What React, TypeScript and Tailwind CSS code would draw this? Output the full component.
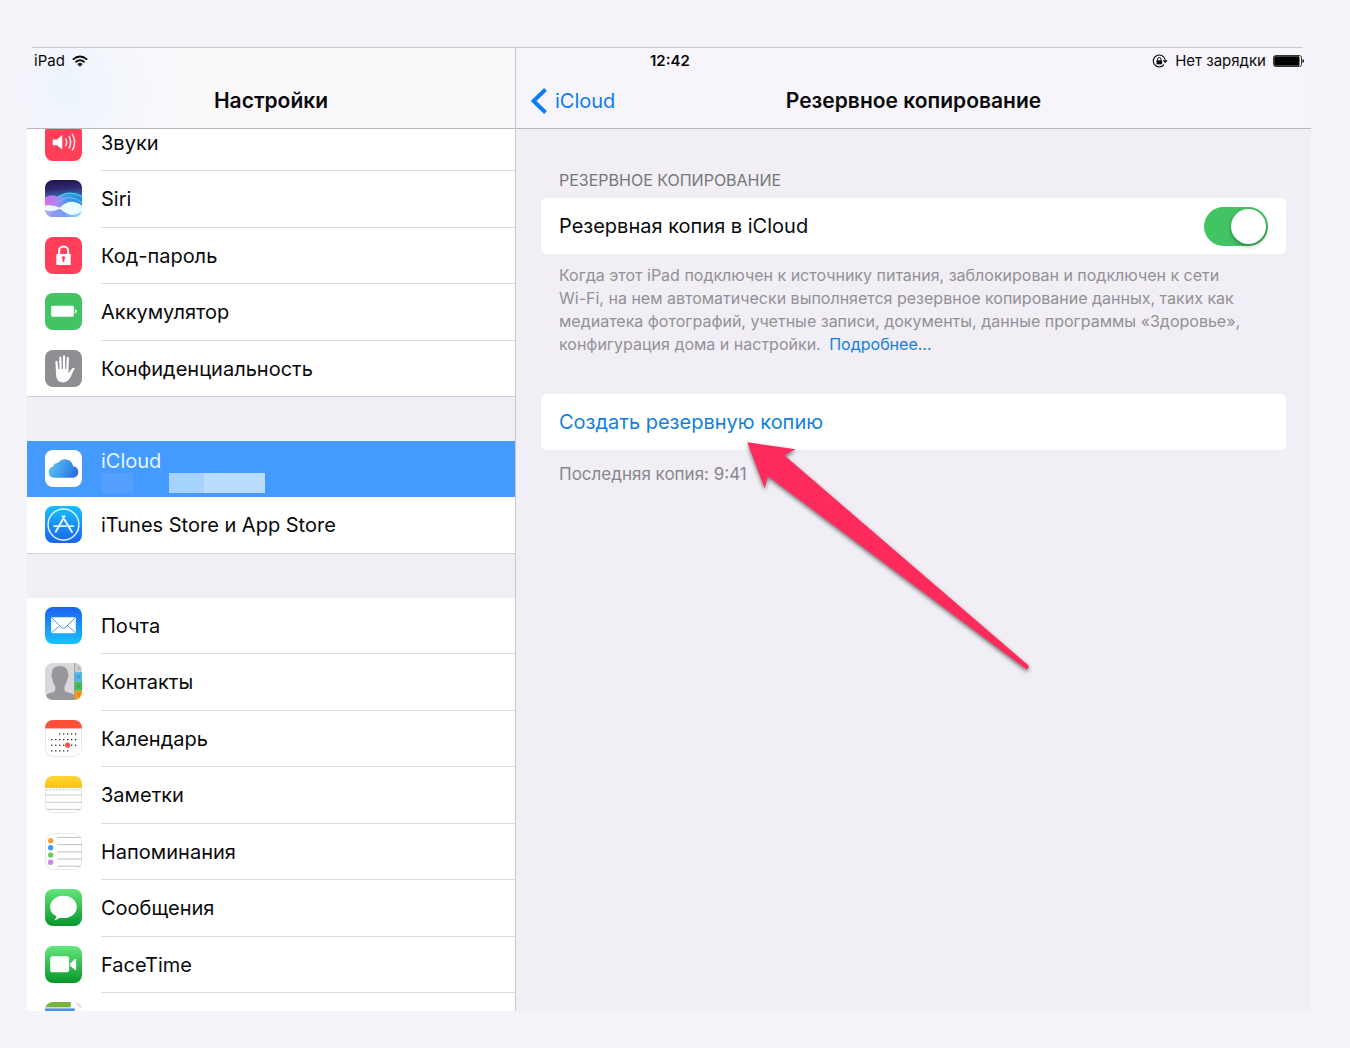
import React, { useState } from "react";

type IconProps = { children: React.ReactNode };

// All app icons share one rounded tile, drawn on a 36 unit canvas
const Tile: React.FC<IconProps> = ({ children }) => (
  <svg viewBox="0 0 36 36" aria-hidden="true" className="mt-[9px] size-[37px] shrink-0 overflow-hidden rounded-[8px]">
    {children}
  </svg>
);

const SoundsIcon = () => (
  <Tile>
    <rect width="36" height="36" fill="#ff3f57" />
    <path d="M7.5 15h4.3l5-4.3v14.2l-5-4.2H7.5z" fill="#fff" />
    <path d="M20 14q2.2 3.8 0 7.6M23.2 11.8q3.6 6 0 12M26.4 9.6q5 8.2 0 16.4" fill="none" stroke="#ffe3e7" strokeWidth="1.5" />
  </Tile>
);

const SiriIcon = () => (
  <Tile>
    <defs>
      <linearGradient id="siri-bg" x1="0.3" y1="0" x2="0.4" y2="1">
        <stop offset="0" stopColor="#22124a" />
        <stop offset="0.25" stopColor="#2f2a72" />
        <stop offset="0.45" stopColor="#3a62ae" />
        <stop offset="1" stopColor="#8fb4f4" />
      </linearGradient>
      <linearGradient id="siri-wave" x1="0" y1="0" x2="1" y2="0">
        <stop offset="0" stopColor="#ee6cec" />
        <stop offset="0.35" stopColor="#b08cf6" />
        <stop offset="0.6" stopColor="#3f9cf0" />
        <stop offset="1" stopColor="#1c8fe0" />
      </linearGradient>
      <linearGradient id="siri-low" x1="0" y1="0" x2="1" y2="0">
        <stop offset="0" stopColor="#b6a8f6" />
        <stop offset="0.5" stopColor="#6f9bf4" />
        <stop offset="1" stopColor="#8fe0fb" />
      </linearGradient>
    </defs>
    <rect width="36" height="36" fill="url(#siri-bg)" />
    <path d="M0 17Q7 13 13 16.5Q23 9 36 16V28H0z" fill="url(#siri-wave)" opacity="0.9" />
    <path d="M12 17Q23 9 36 16" fill="none" stroke="#3fd0e8" strokeWidth="1.2" />
    <path d="M13 22Q22 12 36 22" fill="none" stroke="#7fdcf6" strokeWidth="0.8" opacity="0.8" />
    <path d="M0 27H36V36H0z" fill="url(#siri-low)" />
    <path d="M15 28Q8 31 3 36H13Q14 30 15 28z" fill="#8f93f0" opacity="0.6" />
    <path d="M0 24.8Q8 23.5 14.5 27Q20 21 27 21.2Q33 22 36 25V30.5Q31 34.5 26 34Q20 33 14.5 28Q7 31.5 0 29.5z" fill="#e9fcff" />
  </Tile>
);

const PasscodeIcon = () => (
  <Tile>
    <rect width="36" height="36" fill="#ff3f57" />
    <path d="M13.7 17v-3.4a4.4 4.4 0 0 1 8.8 0V17" fill="none" stroke="#fff" strokeWidth="2" />
    <rect x="11" y="16.5" width="14" height="10.8" rx="0.6" fill="#fff" />
    <path d="M18 18.8a1.6 1.6 0 0 1 .8 3v2.5h-1.6v-2.5a1.6 1.6 0 0 1 .8-3z" fill="#ff3f57" />
  </Tile>
);

const BatteryIcon = () => (
  <Tile>
    <rect width="36" height="36" fill="#43c464" />
    <rect x="6" y="12.5" width="22" height="10.5" rx="1" fill="#fff" />
    <path d="M29 15.5q2 0.4 2 2.3t-2 2.3z" fill="#d9f7df" />
  </Tile>
);

const PrivacyIcon = () => (
  <Tile>
    <rect width="36" height="36" fill="#8f8e93" />
    <g fill="none" stroke="#fff" strokeWidth="2.2" strokeLinecap="round">
      <path d="M11.2 11.5L12 22M14.9 7.5L15.2 20M18.5 6.3V20M22.2 8L21.7 20" />
    </g>
    <path d="M10.5 18.5H22.7V22.5L26.2 18.3Q27.6 16.8 29 17.7Q28 19.5 26.5 22.8Q24.5 27.5 22.7 29.5Q21 31.5 17.5 31.5Q13 31.5 11.6 28Q10.5 25 10.5 18.5z" fill="#fff" />
  </Tile>
);

const CloudIcon = () => (
  <Tile>
    <defs>
      <linearGradient id="cloud" x1="0" y1="0.3" x2="1" y2="0.6">
        <stop offset="0" stopColor="#62c4f2" />
        <stop offset="0.5" stopColor="#3f9eea" />
        <stop offset="1" stopColor="#2f6ce6" />
      </linearGradient>
    </defs>
    <rect width="36" height="36" fill="#fff" />
    <path d="M8.8 27A5.6 5.6 0 0 1 7.8 16A4.6 4.6 0 0 1 12.8 12.6A8 8 0 0 1 27.3 15.7A5.7 5.7 0 0 1 27.6 27z" fill="url(#cloud)" />
    <path d="M12.8 12.6Q15.5 13 17 15.5" fill="none" stroke="#2d83d8" strokeWidth="0.6" opacity="0.6" />
  </Tile>
);

const StoreIcon = () => (
  <Tile>
    <defs>
      <linearGradient id="store" x1="0" y1="0" x2="0" y2="1">
        <stop offset="0" stopColor="#18c0fb" />
        <stop offset="1" stopColor="#1b62f0" />
      </linearGradient>
    </defs>
    <rect width="36" height="36" fill="url(#store)" />
    <g fill="none" stroke="#e4f6ff" strokeLinecap="round">
      <circle cx="18" cy="18" r="15" strokeWidth="1.4" />
      <path d="M19 10L10.5 25M17 10L26.2 25.2M9 19.6H20.5M24.5 19.6H27.5" strokeWidth="1.9" />
    </g>
  </Tile>
);

const MailIcon = () => (
  <Tile>
    <defs>
      <linearGradient id="mail" x1="0" y1="0" x2="0" y2="1">
        <stop offset="0" stopColor="#1c62f0" />
        <stop offset="1" stopColor="#18c2fb" />
      </linearGradient>
    </defs>
    <rect width="36" height="36" fill="url(#mail)" />
    <rect x="6" y="10" width="24" height="15.5" rx="1" fill="#fff" />
    <path d="M6.5 10.5L16.3 20Q18 21.5 19.7 20L29.5 10.5M6.5 25L14.3 18M29.5 25L21.7 18" fill="none" stroke="#3d8fe8" strokeWidth="0.9" />
  </Tile>
);

const ContactsIcon = () => (
  <Tile>
    <rect width="36" height="36" fill="#d9d9db" />
    <path d="M14.5 3C19.5 3 22.5 6 22.5 10.5C23.3 12 22.8 14.5 21.8 15.5C21.3 19 20 21 19 22.5V26.5C21 29.5 28 28.5 28.5 32V36H1V32C2 28.5 8.5 29.5 10 26.5V22.5C8.6 21 7.8 18.5 7.3 15.5C6 14 6 12 6.7 10.5C6.3 6 9.5 3 14.5 3z" fill="#98979b" />
    <rect x="28.8" width="7.2" height="9" fill="#cfcfd0" />
    <rect x="28.8" y="9" width="7.2" height="9" fill="#4fb5f2" />
    <rect x="28.8" y="18" width="7.2" height="9" fill="#46bd5c" />
    <rect x="28.8" y="27" width="7.2" height="9" fill="#f39a1c" />
    <path d="M28.8 0V36" stroke="#8d8d90" strokeWidth="0.7" />
    <g fill="none" strokeWidth="0.8">
      <path d="M31.8 6.5l1-3 1 3" stroke="#a5a5a7" />
      <circle cx="32.5" cy="13.5" r="1.1" stroke="#2d8fd8" />
      <circle cx="32.5" cy="22.5" r="1.1" stroke="#2a9a45" />
      <path d="M31.5 30h2v3" stroke="#cd7c10" />
    </g>
  </Tile>
);

const CALENDAR_DOTS = [
  { y: 13.5, from: 3, to: 7 },
  { y: 19, from: 1, to: 7 },
  { y: 24.5, from: 1, to: 7 },
  { y: 30, from: 1, to: 5 }
];

const CalendarIcon = () => (
  <Tile>
    <rect x="0.5" y="0.5" width="35" height="35" rx="7.5" fill="#fff" stroke="#e9e8ec" />
    <rect width="36" height="8.2" fill="#ff4f36" />
    {CALENDAR_DOTS.map((row) =>
      Array.from({ length: row.to - row.from + 1 }, (_, i) => (
        <rect key={`${row.y}-${i}`} x={2.2 + (row.from + i) * 3.85} y={row.y - 0.5} width="1.2" height="1.2" fill="#111" />
      ))
    )}
    <circle cx="22" cy="24.5" r="2.5" fill="#ff4f45" />
  </Tile>
);

const NotesIcon = () => (
  <Tile>
    <defs>
      <linearGradient id="notes" x1="0" y1="0" x2="0" y2="1">
        <stop offset="0" stopColor="#fdd534" />
        <stop offset="1" stopColor="#fbc40e" />
      </linearGradient>
    </defs>
    <rect x="0.5" y="0.5" width="35" height="35" rx="7.5" fill="#fff" stroke="#e9e8ec" />
    <rect width="36" height="11" fill="url(#notes)" />
    <path d="M0 11.2H36" stroke="#cfa93a" strokeWidth="0.6" />
    <path d="M1 13.4H36" stroke="#c4c4c6" strokeWidth="0.9" strokeDasharray="2 1.2" />
    <path d="M0 18.5H36M0 25.5H36M0 32.5H36" stroke="#c6c6c9" strokeWidth="0.9" />
  </Tile>
);

const RemindersIcon = () => (
  <Tile>
    <rect x="0.5" y="0.5" width="35" height="35" rx="7.5" fill="#fff" stroke="#e9e8ec" />
    <circle cx="5.5" cy="7.5" r="2.6" fill="#fb9f35" />
    <circle cx="5.5" cy="14.3" r="2.6" fill="#35a0f2" />
    <circle cx="5.5" cy="21.5" r="2.6" fill="#6cc854" />
    <circle cx="5.5" cy="28.5" r="2.6" fill="#ca87e4" />
    <path d="M12 4.3H35M12 11.3H36M12 18.3H36M12 25.3H36M12 32.3H35" stroke="#b9b9bd" strokeWidth="0.9" />
  </Tile>
);

const GreenFill = ({ id }: { id: string }) => (
  <>
    <defs>
      <linearGradient id={id} x1="0" y1="0" x2="0" y2="1">
        <stop offset="0" stopColor="#63e77c" />
        <stop offset="1" stopColor="#06962a" />
      </linearGradient>
    </defs>
    <rect width="36" height="36" fill={`url(#${id})`} />
  </>
);

const MessagesIcon = () => (
  <Tile>
    <GreenFill id="messages-bg" />
    <path d="M18 6.5C25.3 6.5 31 11.3 31 17.5S25.3 28.3 18 28.3Q16 28.3 14.5 28Q12.5 30 9 30.3Q11 28.5 11 26.5C7 24.5 5 21.5 5 17.5C5 11.3 10.7 6.5 18 6.5z" fill="#fff" />
  </Tile>
);

const FaceTimeIcon = () => (
  <Tile>
    <GreenFill id="facetime-bg" />
    <rect x="5" y="10" width="18.5" height="15.5" rx="2.5" fill="#fff" />
    <path d="M24.5 17L29 12.8Q30.3 12 30.3 13.4V22.6Q30.3 24 29 23.2L24.5 19.5z" fill="#fff" />
  </Tile>
);

const MapsIcon = () => (
  <Tile>
    <rect width="36" height="36" fill="#fbfafb" />
    <rect width="25" height="5.2" fill="#76b43f" />
    <path d="M29.5 0H36V6Q31.5 4 29.5 0z" fill="#f6cdd5" />
    <rect y="6.2" width="29" height="4" fill="#4a90e2" />
  </Tile>
);

interface SettingsItem {
  id: string;
  label: string;
  Icon: React.FC;
}

const SETTINGS_GROUPS: SettingsItem[][] = [
  [
    { id: "sounds", label: "Звуки", Icon: SoundsIcon },
    { id: "siri", label: "Siri", Icon: SiriIcon },
    { id: "passcode", label: "Код-пароль", Icon: PasscodeIcon },
    { id: "battery", label: "Аккумулятор", Icon: BatteryIcon },
    { id: "privacy", label: "Конфиденциальность", Icon: PrivacyIcon }
  ],
  [
    { id: "icloud", label: "iCloud", Icon: CloudIcon },
    { id: "store", label: "iTunes Store и App Store", Icon: StoreIcon }
  ],
  [
    { id: "mail", label: "Почта", Icon: MailIcon },
    { id: "contacts", label: "Контакты", Icon: ContactsIcon },
    { id: "calendar", label: "Календарь", Icon: CalendarIcon },
    { id: "notes", label: "Заметки", Icon: NotesIcon },
    { id: "reminders", label: "Напоминания", Icon: RemindersIcon },
    { id: "messages", label: "Сообщения", Icon: MessagesIcon },
    { id: "facetime", label: "FaceTime", Icon: FaceTimeIcon },
    { id: "maps", label: "", Icon: MapsIcon }
  ]
];

const SettingsRow: React.FC<{ item: SettingsItem; active: boolean }> = ({ item, active }) => {
  const { id, label, Icon } = item;

  if (active) {
    return (
      <a href={`#${id}`} aria-current="page" className="flex gap-[19px] bg-[#449aff] pl-[18px] text-[#e6f5ff] odd:h-14 even:h-[57px]">
        <Icon />
        <span className="flex flex-col pt-2">
          <span className="leading-6">{label}</span>
          {/* Account name and address stay masked */}
          <span className="flex h-5">
            <span className="mr-9 w-8 bg-[#529fff]" />
            <span className="w-[35px] bg-[#a6d2ff]" />
            <span className="w-[61px] bg-[#badcfd]" />
          </span>
        </span>
      </a>
    );
  }

  return (
    <a
      href={`#${id}`}
      aria-label={label || "Карты"}
      className="group flex gap-[19px] bg-white pl-[18px] last:border-b last:border-[#d0ced6] odd:h-14 even:h-[57px]"
    >
      <Icon />
      <span className="flex flex-1 items-center border-b border-[#dad9de] group-last:border-b-0">{label}</span>
    </a>
  );
};

const WifiIcon = () => (
  <svg viewBox="0 0 16 12" aria-hidden="true" className="h-3 w-4">
    <g fill="none" stroke="#0a0a0c" strokeWidth="1.9">
      <path d="M0.8 4.6Q8 -1.7 15.2 4.6" />
      <path d="M3.4 7.3Q8 3.3 12.6 7.3" />
    </g>
    <path d="M5.3 9Q8 6.9 10.7 9L8 11.8z" fill="#0a0a0c" />
  </svg>
);

const RotationLockIcon = () => (
  <svg viewBox="0 0 16 14" aria-hidden="true" className="h-3.5 w-4">
    <path d="M13.2 6A6 6 0 1 0 12 10.7" fill="none" stroke="#0a0a0c" strokeWidth="1.1" />
    <path d="M10.8 6.2H15.6L13.2 9.2z" fill="#0a0a0c" />
    <rect x="4.5" y="6.3" width="5.6" height="4" fill="#0a0a0c" />
    <path d="M5.6 6.5V5.2a1.7 1.7 0 0 1 3.4 0v1.3" fill="none" stroke="#0a0a0c" strokeWidth="1" />
  </svg>
);

const ChargeIcon = () => (
  <svg viewBox="0 0 31 12" aria-hidden="true" className="h-3 w-[31px]">
    <rect x="0.5" y="0.5" width="28" height="11" rx="2" fill="#fff" stroke="#333" />
    <rect x="1.2" y="1.2" width="25.3" height="9.6" rx="0.8" fill="#000" />
    <path d="M29.5 4Q31 4.3 31 6T29.5 8z" fill="#000" />
  </svg>
);

const PointerArrow = () => (
  <svg
    viewBox="0 0 290 236"
    aria-hidden="true"
    className="pointer-events-none absolute top-12 left-[206px] h-[236px] w-[290px] overflow-visible drop-shadow-[0_2px_2px_rgba(0,0,0,0.55)]"
  >
    <path d="M0.3 0.3L48.7 7.3L37.3 13.3L281 223Q283 226 279.7 227.5L20.7 34L17.7 46.3z" fill="#ff2b5c" />
  </svg>
);

const Sidebar = () => (
  <aside className="flex w-[488px] shrink-0 flex-col overflow-hidden bg-[#f1eef5]">
    <header className="h-[81px] shrink-0 border-b border-[#b9b7be] bg-[#fbf8fc] bg-[radial-gradient(circle_at_38px_42px,#edf4fc_0,#f2f6fc_40px,#fbf8fc_110px)]">
      <div className="flex h-[26px] items-center gap-[7px] pl-[7px] text-[15px]">
        iPad
        <WifiIcon />
      </div>
      <h1 className="text-center text-[21px] leading-[54px] font-semibold">Настройки</h1>
    </header>
    <nav aria-label="Настройки" className="min-h-0 flex-1 overflow-hidden">
      {/* List is scrolled a little, so the first row sits under the header */}
      <div className="-mt-[14px] flex flex-col gap-11 text-xl">
        {SETTINGS_GROUPS.map((group) => (
          <div key={group[0].id}>
            {group.map((item) => (
              <SettingsRow key={item.id} item={item} active={item.id === "icloud"} />
            ))}
          </div>
        ))}
      </div>
    </nav>
  </aside>
);

const BackupPanel = () => {
  const [enabled, setEnabled] = useState(true);

  return (
    <main className="flex min-w-0 flex-1 flex-col border-l border-[#c9c8ce] bg-[#f1eef5]">
      <header className="h-[81px] shrink-0 border-b border-[#b9b7be] bg-[#f7f5fb]">
        <div className="flex h-[26px] items-center justify-between pr-[7px] pl-[134px] text-[15px]">
          <time className="font-semibold">12:42</time>
          <div className="flex items-center gap-[7px]">
            <RotationLockIcon />
            Нет зарядки
            <ChargeIcon />
          </div>
        </div>
        <div className="grid grid-cols-[1fr_auto_1fr] items-center text-[21px] leading-[54px]">
          <a href="#icloud" className="flex items-center gap-2 pl-[15px] text-xl leading-[54px] text-[#0a7cf5]">
            <svg viewBox="0 0 16 26" aria-hidden="true" className="h-[26px] w-4">
              <path d="M14.5 1.500L2.500 13L14.500 24.500" fill="none" stroke="currentColor" strokeWidth="4" />
            </svg>
            iCloud
          </a>
          <h2 className="font-semibold">Резервное копирование</h2>
        </div>
      </header>

      <div className="flex flex-col px-[25px] pt-10">
        <h3 className="px-[18px] text-base leading-[22px] text-[#77767b] uppercase">Резервное копирование</h3>
        <label className="mt-[7px] flex h-14 items-center justify-between rounded-[5px] bg-white px-[18px] text-xl">
          Резервная копия в iCloud
          <input
            type="checkbox"
            role="switch"
            checked={enabled}
            onChange={(e) => setEnabled(e.target.checked)}
            className="relative h-[39px] w-16 appearance-none rounded-full bg-[#c9c8ce] before:absolute before:top-0.5 before:left-0.5 before:size-[35px] before:rounded-full before:bg-white before:shadow-[0_2px_4px_rgba(0,0,0,0.35)] checked:bg-[#43c464] checked:before:left-[27px]"
          />
        </label>
        <p className="mt-[10px] px-[18px] text-base leading-[23px] text-[#929196]">
          Когда этот iPad подключен к источнику питания, заблокирован и подключен к сети
          <br />
          Wi-Fi, на нем автоматически выполняется резервное копирование данных, таких как
          <br />
          медиатека фотографий, учетные записи, документы, данные программы «Здоровье»,
          <br />
          конфигурация дома и настройки.{" "}
          <a href="#more" className="ml-1 text-[#127fe0]">
            Подробнее…
          </a>
        </p>

        <div className="relative mt-[38px]">
          <button type="button" className="flex h-14 w-full items-center rounded-[5px] bg-white px-[18px] text-xl text-[#127fe0]">
            Создать резервную копию
          </button>
          <p className="mt-3 px-[18px] text-[17px] leading-6 text-[#88878c]">Последняя копия: 9:41</p>
          <PointerArrow />
        </div>
      </div>
    </main>
  );
};

export default function App() {
  return (
    <div className="flex h-screen flex-col bg-[#f5f4fa] pt-[47px] pr-[39px] pb-[37px] pl-[27px] font-['Inter','Noto_Sans',sans-serif] text-[#0a0a0c]">
      <div className="mr-2 ml-[5px] h-px shrink-0 bg-[#c9c8ce]" />
      <div className="flex min-h-0 flex-1">
        <Sidebar />
        <BackupPanel />
      </div>
    </div>
  );
}
